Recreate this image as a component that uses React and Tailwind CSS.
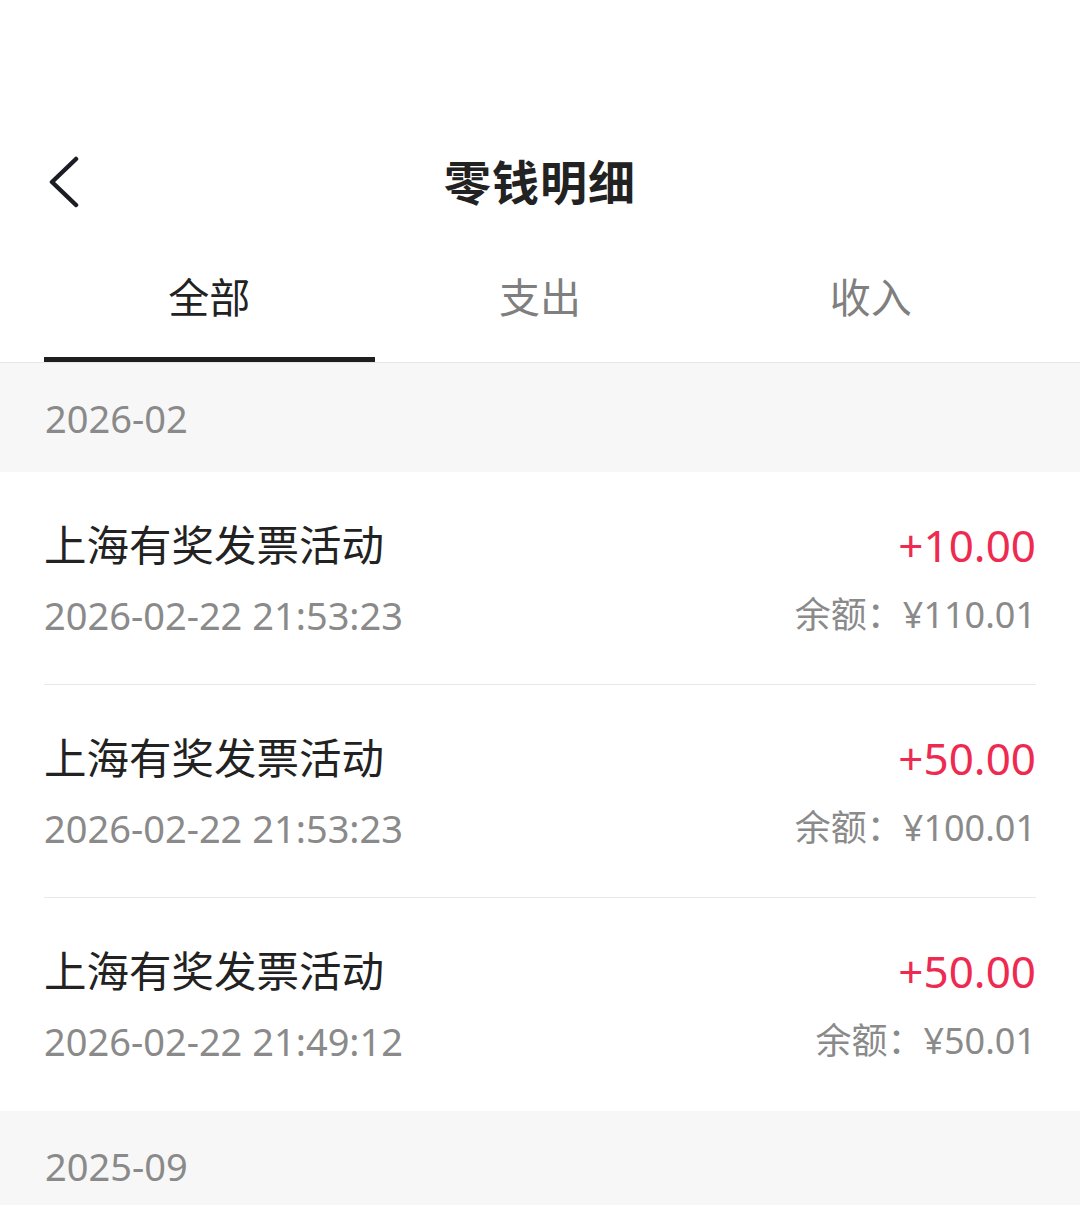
import React from "react";

const items = [
  { title: "上海有奖发票活动", time: "2026-02-22 21:53:23", amount: "+10.00", balance: "¥110.01" },
  { title: "上海有奖发票活动", time: "2026-02-22 21:53:23", amount: "+50.00", balance: "¥100.01" },
  { title: "上海有奖发票活动", time: "2026-02-22 21:49:12", amount: "+50.00", balance: "¥50.01" },
];

export default function App() {
  return (
    <div
      className="w-[1080px] h-[1205px] overflow-hidden bg-white"
      style={{ fontFamily: '"Noto Sans", "Noto Sans CJK SC", sans-serif' }}
    >
      <div className="h-[130px]" />
      <div className="relative h-[106px] flex items-center justify-center">
        <div className="absolute left-[46px] top-[26px]">
          <svg width="34" height="52" viewBox="0 0 34 52" fill="none">
            <path d="M30 3 L6 26 L30 49" stroke="#1c1c24" strokeWidth="4.5" strokeLinecap="round" strokeLinejoin="round" />
          </svg>
        </div>
        <div className="text-[47px] font-bold text-[#222222] leading-none tracking-[1px] -mt-[2px]">零钱明细</div>
      </div>
      <div className="px-[44px] border-b border-[#e6e6e6]">
        <div className="grid grid-cols-3 h-[126px]">
          <div className="flex flex-col items-center justify-between">
            <div className="h-[121px] flex items-center text-[41px] text-[#222222] leading-none pt-[1px]">全部</div>
            <div className="h-[5px] w-full bg-[#1f1f1f]" />
          </div>
          <div className="flex items-center justify-center text-[41px] text-[#7f7f7f] leading-none pb-[4px]">支出</div>
          <div className="flex items-center justify-center text-[41px] text-[#7f7f7f] leading-none pb-[4px]">收入</div>
        </div>
      </div>
      <div className="h-[109px] bg-[#f7f7f7] flex items-center px-[45px] text-[38px] text-[#8a8a8a] leading-none">2026-02</div>
      <div className="px-[44px]">
        {items.map((it, i) => (
          <div
            key={i}
            className={`h-[213px] flex justify-between items-start pt-[48px] ${i < items.length - 1 ? "border-b border-[#e8e8e8]" : ""}`}
          >
            <div className="flex flex-col">
              <div className="text-[42.5px] text-[#222222] leading-none h-[50px] flex items-center">{it.title}</div>
              <div className="text-[38px] text-[#8a8a8a] leading-none mt-[22px] h-[46px] flex items-center">{it.time}</div>
            </div>
            <div className="flex flex-col items-end">
              <div className="text-[44px] text-[#ee2a50] leading-none h-[50px] flex items-center">{it.amount}</div>
              <div className="text-[36px] text-[#8a8a8a] leading-none mt-[22px] h-[46px] flex items-center">余额：{it.balance}</div>
            </div>
          </div>
        ))}
      </div>
      <div className="h-[200px] bg-[#f7f7f7] flex items-start pt-[36px] px-[45px] text-[38px] text-[#8a8a8a] leading-none">2025-09</div>
    </div>
  );
}
